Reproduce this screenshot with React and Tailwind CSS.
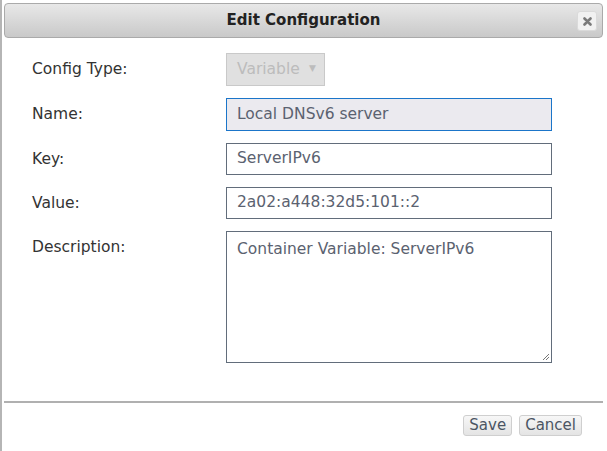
import React from 'react';

const Field = ({ label, children }) => (
  <div className="flex">
    <label className="w-[194px] shrink-0 text-[#333] pt-[5px]">{label}</label>
    {children}
  </div>
)

const Btn = ({ children }) => (
  <button className="h-[21px] px-[5px] rounded-[3px] border border-[#cfcfcf] bg-gradient-to-b from-[#f7f7f7] to-[#e4e4e4] text-[#4b5563] text-[15px] leading-none">
    {children}
  </button>
)

export default function App() {
  return (
    <div className="w-[607px] h-[451px] bg-white relative overflow-hidden" style={{ fontFamily: '"DejaVu Sans", Verdana, sans-serif' }}>
      <div className="absolute left-0 top-0 bottom-0 w-[2px] bg-[#b5b5b5]" />
      <div className="h-full flex flex-col pl-[4px] pr-[4px] pt-[3px] text-[15.5px]">
        <div className="h-[35px] rounded-[4px] border border-[#aaaaaa] bg-gradient-to-b from-[#e8e8e8] to-[#c9c9c9] flex items-center justify-center relative">
          <span className="font-bold text-[#222] text-[15px]">Edit Configuration</span>
          <button className="absolute right-[5px] top-[7px] w-[20px] h-[20px] rounded-[3px] bg-[#f1f1f1] border border-[#dadada] flex items-center justify-center">
            <svg width="9" height="9" viewBox="0 0 9 9">
              <path d="M1.5 1.5L7.5 7.5M7.5 1.5L1.5 7.5" stroke="#7a7a7a" strokeWidth="2.6" strokeLinecap="round" />
            </svg>
          </button>
        </div>

        <div className="flex flex-col pl-[28px] pt-[15px] gap-[12px]">
          <Field label="Config Type:">
            <div className="w-[99px] h-[33px] bg-[#e0e0e0] border border-[#c9c9c9] flex items-center justify-between pl-[10px] pr-[8px] text-[#bcbcbc]">
              <span>Variable</span>
              <span className="text-[9px] mt-[-2px]">▼</span>
            </div>
          </Field>
          <Field label="Name:">
            <div className="w-[326px] h-[33px] bg-[#ebeaef] border border-[#1b75c9] flex items-center px-[10px] text-[#5b6270]">
              Local DNSv6 server
            </div>
          </Field>
          <Field label="Key:">
            <div className="w-[326px] h-[32px] bg-white border border-[#626d7b] flex items-center px-[10px] text-[#5b6270]">
              ServerIPv6
            </div>
          </Field>
          <Field label="Value:">
            <div className="w-[326px] h-[32px] bg-white border border-[#626d7b] flex items-center px-[10px] text-[#5b6270]">
              2a02:a448:32d5:101::2
            </div>
          </Field>
          <Field label="Description:">
            <div className="w-[326px] h-[132px] bg-white border border-[#626d7b] px-[10px] pt-[6px] text-[#5b6270] relative">
              Container Variable: ServerIPv6
              <svg className="absolute right-[1px] bottom-[1px]" width="9" height="9" viewBox="0 0 9 9">
                <path d="M8 2L2 8M8 5L5 8" stroke="#777" strokeWidth="1" />
              </svg>
            </div>
          </Field>
        </div>

        <div className="mt-[38px] border-t-2 border-[#b0b0b0]" />
        <div className="flex justify-end gap-[7px] pr-[21px] pt-[12px]">
          <Btn>Save</Btn>
          <Btn>Cancel</Btn>
        </div>
      </div>
    </div>
  )
}
